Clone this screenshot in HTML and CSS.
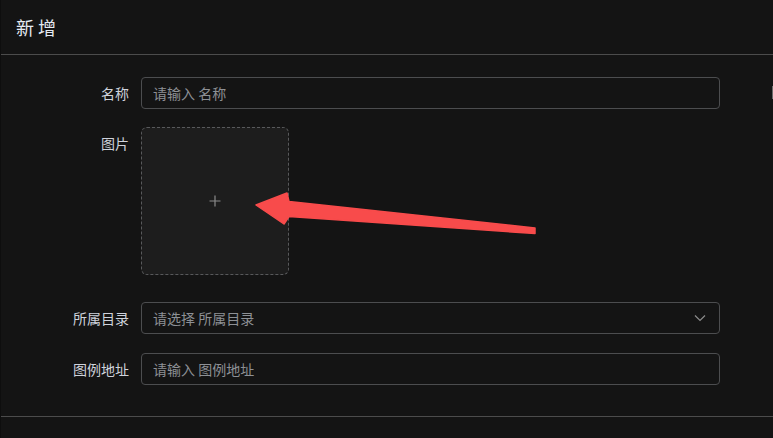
FILE: index.html
```html
<!DOCTYPE html>
<html lang="zh-CN">
<head>
    <meta charset="UTF-8">
    <meta name="viewport" content="width=device-width, initial-scale=1.0">
    <title>新增</title>
    <link rel="stylesheet" href="styles.css">
</head>
<body>
    <div class="dialog">
        <div class="dialog-header">
            <span class="dialog-title">新 增</span>
        </div>

        <div class="dialog-body">
            <form class="form">
                <div class="form-item">
                    <label class="form-label">名称</label>
                    <div class="form-content">
                        <div class="input">
                            <input type="text" placeholder="请输入 名称">
                        </div>
                    </div>
                    <span class="edge-mark"></span>
                </div>

                <div class="form-item form-item-upload">
                    <label class="form-label">图片</label>
                    <div class="form-content">
                        <div class="upload">
                            <svg class="upload-plus" width="12" height="12" viewBox="0 0 12 12">
                                <path d="M6 0.5V11.5M0.5 6H11.5" stroke="#8b8b8b" stroke-width="1.2" fill="none"/>
                            </svg>
                        </div>
                    </div>
                </div>

                <div class="form-item form-item-select">
                    <label class="form-label">所属目录</label>
                    <div class="form-content">
                        <div class="input select">
                            <input type="text" placeholder="请选择 所属目录" readonly>
                            <svg class="select-arrow" width="12" height="8" viewBox="0 0 12 8">
                                <path d="M1 1.5L6 6.5L11 1.5" stroke="#8b8b8b" stroke-width="1.2" fill="none"/>
                            </svg>
                        </div>
                    </div>
                </div>

                <div class="form-item">
                    <label class="form-label">图例地址</label>
                    <div class="form-content">
                        <div class="input">
                            <input type="text" placeholder="请输入 图例地址">
                        </div>
                    </div>
                </div>
            </form>
        </div>

        <div class="dialog-footer"></div>

        <!-- annotation arrow drawn over the form -->
        <svg class="annotation" width="773" height="438" viewBox="0 0 773 438">
            <path d="M256 205 L287 193 L289 201.5 L535 228 L535 233.5 L289 216.5 L284 224 Z"
                  fill="#f84b4b" stroke="#f84b4b" stroke-width="1.5" stroke-linejoin="round"/>
        </svg>
    </div>
</body>
</html>
```

FILE: styles.css
```css
* {
    margin: 0;
    padding: 0;
    box-sizing: border-box;
}

body {
    font-family: "Noto Sans CJK SC", "Noto Sans", sans-serif;
    background: #141414;
    color: #cfd3dc;
    width: 773px;
    height: 438px;
    overflow: hidden;
}

.dialog {
    position: relative;
    height: 438px;
    border-left: 1px solid #0e0e0e;
    background: #141414;
}

.dialog-header {
    height: 55px;
    padding-left: 15px;
    border-bottom: 1px solid #4c4c4c;
    display: flex;
    align-items: center;
}

.dialog-title {
    font-size: 18px;
    line-height: 24px;
    color: #e5eaf3;
}

.dialog-body {
    padding: 22px 0 13px;
}

.form-item {
    display: flex;
    align-items: flex-start;
    margin-bottom: 18px;
}

.form-item-upload {
    margin-bottom: 27px;
}

.form-item-select {
    margin-bottom: 19px;
}

.form-label {
    width: 140px;
    flex-shrink: 0;
    padding-right: 12px;
    text-align: right;
    font-size: 14px;
    line-height: 32px;
    color: #cfd3dc;
}

.form-content {
    width: 579px;
}

.input {
    height: 32px;
    border: 1px solid #4c4d4f;
    border-radius: 4px;
    padding: 0 11px;
    display: flex;
    align-items: center;
}

.input input {
    flex: 1;
    min-width: 0;
    border: none;
    outline: none;
    background: transparent;
    font-family: inherit;
    font-size: 14px;
    color: #cfd3dc;
}

.input input::placeholder {
    color: #8d9095;
}

.select-arrow {
    flex-shrink: 0;
    margin-right: 2px;
}

.upload {
    width: 148px;
    height: 148px;
    border: 1px dashed #58595b;
    border-radius: 6px;
    background: #1d1d1d;
    display: flex;
    align-items: center;
    justify-content: center;
}

.edge-mark {
    width: 1px;
    height: 13px;
    margin-top: 9px;
    margin-left: 52px;
    background: #6a6a6a;
}

.dialog-footer {
    border-top: 1px solid #4c4c4c;
}

.annotation {
    position: absolute;
    left: -1px;
    top: 0;
    pointer-events: none;
}
```
